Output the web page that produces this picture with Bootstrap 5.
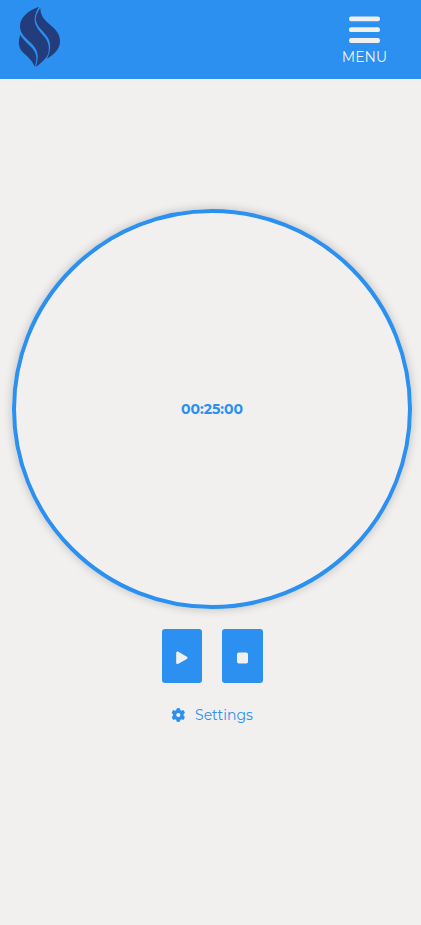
<!DOCTYPE html>
<html lang="en">
<head>
<meta charset="utf-8">
<meta name="viewport" content="width=device-width, initial-scale=1">
<title>Timer</title>
<link href="https://cdn.jsdelivr.net/npm/bootstrap@5.3.0/dist/css/bootstrap.min.css" rel="stylesheet">
<style>
:root{--brand:#2b90ef;--paper:#f1f0ee}
body{background:var(--paper);color:var(--brand);font-family:Montserrat,Inter,sans-serif;font-size:14px;line-height:20px;overflow-x:hidden}
.topbar{background:var(--brand);height:79px;padding:0 34px 0 10px}
.menu-btn{color:var(--paper);font-size:14px;line-height:20px;padding-top:16px}
.menu-btn:hover{color:var(--paper)}
.menu-btn svg{margin:0 7px 4px}
.timer{padding:130px 9px 0 12px}
.dial{width:400px;height:400px;border:4px solid var(--brand);box-shadow:0 0 10px rgba(0,0,0,.22)}
.controls{gap:20px;margin-top:20px}
.control{width:40px;height:54px;border-radius:3px;background:var(--brand);color:var(--paper)}
.control.stop{width:41px}
.control svg{margin-top:3px}
.settings{margin-top:22px;color:var(--brand);gap:10px}
</style>
<script src="https://cdn.jsdelivr.net/npm/bootstrap@5.3.0/dist/js/bootstrap.bundle.min.js"></script>
</head>
<body>
<header class="topbar d-flex justify-content-between align-items-start">
  <a href="#" aria-label="Home" class="d-block lh-1">
    <svg width="60" height="79" viewBox="0 0 180 237" fill="#233c7c">
      <path d="M87 20C52 32 30 54 30 78C30 104 51 116 66 132C82 149 90 168 77 201C94 189 109 176 114 162C120 143 115 124 102 109C86 91 74 78 74 58C74 43 80 33 87 20Z"/>
      <path d="M91 24C80 39 75 52 79 66C84 83 105 98 114 114C124 132 122 152 111 176C133 164 150 146 150 124C150 102 137 89 122 76C105 61 91 49 91 24Z"/>
      <path d="M31 104C25 122 24 142 37 155C49 167 65 177 74 200C83 177 80 161 68 146C56 132 41 122 31 104Z"/>
    </svg>
  </a>
  <button class="menu-btn btn border-0 pb-0 px-0 d-flex flex-column align-items-center" type="button">
    <svg width="31" height="27" fill="currentColor"><rect width="31" height="4.8" y="0.4" rx="2.2"/><rect width="31" height="4.8" y="11.3" rx="2.2"/><rect width="31" height="4.8" y="22.1" rx="2.2"/></svg>
    <span>MENU</span>
  </button>
</header>
<main class="timer d-flex flex-column align-items-center">
  <div class="dial rounded-circle d-flex align-items-center justify-content-center flex-shrink-0">
    <span class="fw-bold">00:25:00</span>
  </div>
  <div class="controls d-flex">
    <button class="control btn border-0 p-0 d-flex align-items-center justify-content-center" type="button" aria-label="Start">
      <svg width="12" height="14" viewBox="0 0 12 14" fill="currentColor"><path d="M.2 2.1C.2.7 1.3.2 2.4.8L10.8 5.7Q12.5 6.8 10.8 7.9L2.4 12.8C1.3 13.4 .2 12.9.2 11.5Z"/></svg>
    </button>
    <button class="control stop btn border-0 p-0 d-flex align-items-center justify-content-center" type="button" aria-label="Stop">
      <svg width="11" height="12"><rect y=".5" width="11" height="11" rx="1.7" fill="currentColor"/></svg>
    </button>
  </div>
  <a href="#" class="settings d-flex align-items-center text-decoration-none">
    <svg width="14" height="14" viewBox="-.3 0 14 14" fill="currentColor"><path fill-rule="evenodd" d="M5.3.4Q7-.3 8.7.4L9.1 2.2 10.2 2.8 12 2.1Q13.1 3.3 13.6 5L12.3 6.3V7.7L13.6 9Q13.1 10.7 12 11.9L10.2 11.2 9.1 11.8 8.7 13.6Q7 14.3 5.3 13.6L4.9 11.8 3.8 11.2 2 11.9Q.9 10.7.4 9L1.7 7.7V6.3L.4 5Q.9 3.3 2 2.1L3.8 2.8 4.9 2.2ZM7 4.9A2.1 2.1 0 1 0 7 9.1A2.1 2.1 0 1 0 7 4.9Z"/></svg>
    <span>Settings</span>
  </a>
</main>
</body>
</html>
